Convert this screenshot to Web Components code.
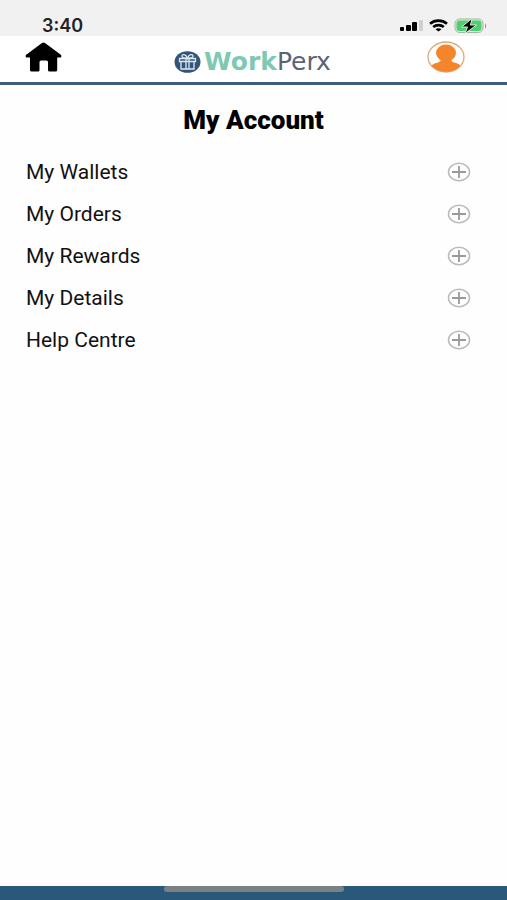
<!DOCTYPE html>
<html lang="en">
<head>
<meta charset="utf-8">
<meta name="viewport" content="width=device-width, initial-scale=1">
<title>WorkPerx - My Account</title>
<style>
  body {
    background-color: #fefefe;
    color: #111;
    font-family: Roboto, sans-serif;
    margin: 0;
  }
</style>
</head>
<body>
<account-page>
  <status-bar slot="top" time="3:40"></status-bar>
  <app-header slot="top"></app-header>
  <account-menu heading="My Account">
    <menu-item>My Wallets</menu-item>
    <menu-item>My Orders</menu-item>
    <menu-item>My Rewards</menu-item>
    <menu-item>My Details</menu-item>
    <menu-item>Help Centre</menu-item>
  </account-menu>
  <bottom-bar slot="bottom"></bottom-bar>
</account-page>

<script>
// page layout: bars on top, content, bar at the bottom
class AccountPage extends HTMLElement {
  constructor() {
    super();
    this.attachShadow({mode: 'open'}).innerHTML = `
      <style>
      :host {
        display: flex;
        flex-direction: column;
        min-height: 100vh;
      }

      main {
        flex: 1;
      }
      </style>
      <slot name="top"></slot>
      <main><slot></slot></main>
      <slot name="bottom"></slot>
      `;
  }
}

class StatusBar extends HTMLElement {
  constructor() {
    super();
    this.attachShadow({mode: 'open'}).innerHTML = `
      <style>
      :host {
        align-items: flex-end;
        background-color: #f1f1f1;
        box-sizing: border-box;
        color: #222;
        display: flex;
        height: 36px;
        justify-content: space-between;
        padding: 0 20px 0 42px;
      }

      .time {
        font: 600 18px/20px Inter, sans-serif;
      }

      .icons {
        align-items: center;
        display: flex;
        gap: 6px;
        height: 20px;
      }

      svg {
        display: block;
      }
      </style>
      <span class="time"></span>
      <div class="icons">
        <svg width="23" height="14" viewBox="0 0 23 14" aria-hidden="true">
          <rect x="0" y="8" width="4" height="4" rx="1" fill="#000"/>
          <rect x="6" y="6" width="5" height="6" rx="1" fill="#000"/>
          <rect x="12" y="3" width="5" height="9" rx="1" fill="#000"/>
          <rect x="19" y="1" width="4" height="11" rx="1" fill="#d0d0d0"/>
        </svg>
        <svg width="19" height="14" viewBox="0 0 19 14" fill="none" stroke="#000" stroke-width="2.6" aria-hidden="true">
          <path d="M1 4.700C5.8.600 13.2.600 18 4.700"/>
          <path d="M4.200 8c2.900-2.500 7.700-2.500 10.600 0"/>
          <path d="M9.500 12.500 6.500 10.300c1.700-1.400 4.300-1.400 6 0z" fill="#000" stroke="none"/>
        </svg>
        <svg width="33" height="16" viewBox="0 0 33 16" aria-hidden="true">
          <rect x="1" y="1" width="28" height="13.500" rx="4.500" fill="#d9eedc" stroke="#a5b3a7"/>
          <rect x="2.500" y="2.500" width="25" height="10.500" rx="3" fill="#4fce72"/>
          <path d="M31 5.500c1.600.6 1.600 4.400 0 5z" fill="#999"/>
          <path d="M18 .5 7.500 9h6L11 15.500 22.500 7h-6z" fill="#000" stroke="#d9eedc" stroke-width="1"/>
        </svg>
      </div>
      `;
  }

  connectedCallback() {
    this.shadowRoot.querySelector('.time').textContent = this.getAttribute('time');
  }
}

class AppHeader extends HTMLElement {
  constructor() {
    super();
    this.attachShadow({mode: 'open'}).innerHTML = `
      <style>
      :host {
        background-color: white;
        border-bottom: 3px solid #3d5c80;
        box-sizing: border-box;
        display: block;
        height: 49px;
        padding: 4px 42px 0 25px;
      }

      nav {
        align-items: flex-start;
        display: flex;
        justify-content: space-between;
      }

      a {
        color: inherit;
        text-decoration: none;
      }

      svg {
        display: block;
      }
      </style>
      <nav>
        <a href="#home" aria-label="Home">
          <svg width="37" height="34" viewBox="0 0 37 34" aria-hidden="true">
            <path d="M18.500 2.500Q17.700 2.500 17 3.100L1.200 14.700Q.3 15.500.7 16.700q.4.900 1.500.9H5v12.400q0 1.500 1.700 1.500H13q1.500 0 1.500-1.500V22q0-1.500 1.500-1.500h5.500q1.500 0 1.500 1.500v8q0 1.500 1.500 1.500h6q1.700 0 1.700-1.500V17.600h2.600q1.100 0 1.500-.9.400-1.200-.5-2L20 3.100q-.7-.6-1.500-.6z"/>
          </svg>
        </a>
        <work-perx-logo></work-perx-logo>
        <a href="#account" aria-label="Account">
          <svg width="38" height="34" viewBox="0 0 38 34" aria-hidden="true">
            <defs><clipPath id="ring"><ellipse cx="19" cy="17" rx="17.800" ry="14.800"/></clipPath></defs>
            <ellipse cx="19" cy="17" rx="18" ry="15" fill="none" stroke="#dfa878" stroke-width="1.300"/>
            <g fill="#f5852b" clip-path="url(#ring)">
              <ellipse cx="19" cy="13" rx="10" ry="8.500"/>
              <path d="M13.500 18h11v3q1 1.500 4.500 2 4.500 1 5.500 4.500V34h-31v-6.500q1-3.500 5.500-4.500 3.500-.5 4.500-2z"/>
            </g>
          </svg>
        </a>
      </nav>
      `;
  }
}

class WorkPerxLogo extends HTMLElement {
  constructor() {
    super();
    this.attachShadow({mode: 'open'}).innerHTML = `
      <style>
      :host {
        align-items: center;
        display: flex;
        gap: 3px;
        padding: 8px 0 0 16px;
      }

      .name {
        color: #5a6474;
        font: 25px/28px "DejaVu Sans", sans-serif;
      }

      b {
        color: #7fc9b3;
      }
      </style>
      <svg width="27" height="22" viewBox="0 0 27 22" aria-hidden="true">
        <ellipse cx="13.500" cy="11" rx="13" ry="10.800" fill="#355479"/>
        <g fill="none" stroke="#dbe8f1" stroke-width="1.300">
          <path d="M5.500 7.500h16v3h-16zM7 10.500h13v7.500H7zM12 7.500V18M15 7.500V18"/>
          <path d="M13.500 7.300C12 3 8 2.500 8 5.200c0 1.500 2 2.100 5.500 2.100 3.500 0 5.500-.6 5.500-2.100 0-2.700-4-2.200-5.500 2.100z"/>
        </g>
      </svg>
      <span class="name"><b>Work</b>Perx</span>
      `;
  }
}

class AccountMenu extends HTMLElement {
  constructor() {
    super();
    this.attachShadow({mode: 'open'}).innerHTML = `
      <style>
      :host {
        display: block;
        padding: 20px 36px 20px 26px;
      }

      h1 {
        color: black;
        font-size: 26px;
        font-weight: 900;
        line-height: 30px;
        margin: 0 -10px 16px 0;
        text-align: center;
      }
      </style>
      <h1></h1>
      <div role="list"><slot></slot></div>
      `;
  }

  connectedCallback() {
    this.shadowRoot.querySelector('h1').textContent = this.getAttribute('heading');
  }
}

class MenuItem extends HTMLElement {
  constructor() {
    super();
    this.attachShadow({mode: 'open'}).innerHTML = `
      <style>
      :host {
        display: block;
      }

      button {
        align-items: center;
        background: none;
        border: none;
        color: inherit;
        cursor: pointer;
        display: flex;
        font: inherit;
        font-size: 21px;
        height: 42px;
        justify-content: space-between;
        padding: 0;
        text-align: left;
        width: 100%;
      }
      </style>
      <button type="button" aria-expanded="false">
        <span><slot></slot></span>
        <svg width="24" height="20" viewBox="0 0 24 20" fill="none" aria-hidden="true">
          <ellipse cx="12" cy="10" rx="10.500" ry="8.700" stroke="#bbb" stroke-width="1.500"/>
          <path d="M5 10h14M12 4v12" stroke="#999" stroke-width="1.800"/>
        </svg>
      </button>
      `;
    this.setAttribute('role', 'listitem');
    this.button = this.shadowRoot.querySelector('button');
    this.button.onclick = () => {
      let open = this.button.getAttribute('aria-expanded') == 'true';
      this.button.setAttribute('aria-expanded', String(!open));
    };
  }
}

class BottomBar extends HTMLElement {
  constructor() {
    super();
    this.attachShadow({mode: 'open'}).innerHTML = `
      <style>
      :host {
        background-color: #2a587b;
        display: flex;
        height: 14px;
        justify-content: center;
      }

      .indicator {
        background-color: #7b8083;
        border-radius: 3px;
        height: 6px;
        width: 180px;
      }
      </style>
      <div class="indicator"></div>
      `;
  }
}

customElements.define('account-page', AccountPage);
customElements.define('status-bar', StatusBar);
customElements.define('work-perx-logo', WorkPerxLogo);
customElements.define('app-header', AppHeader);
customElements.define('account-menu', AccountMenu);
customElements.define('menu-item', MenuItem);
customElements.define('bottom-bar', BottomBar);
</script>
</body>
</html>
